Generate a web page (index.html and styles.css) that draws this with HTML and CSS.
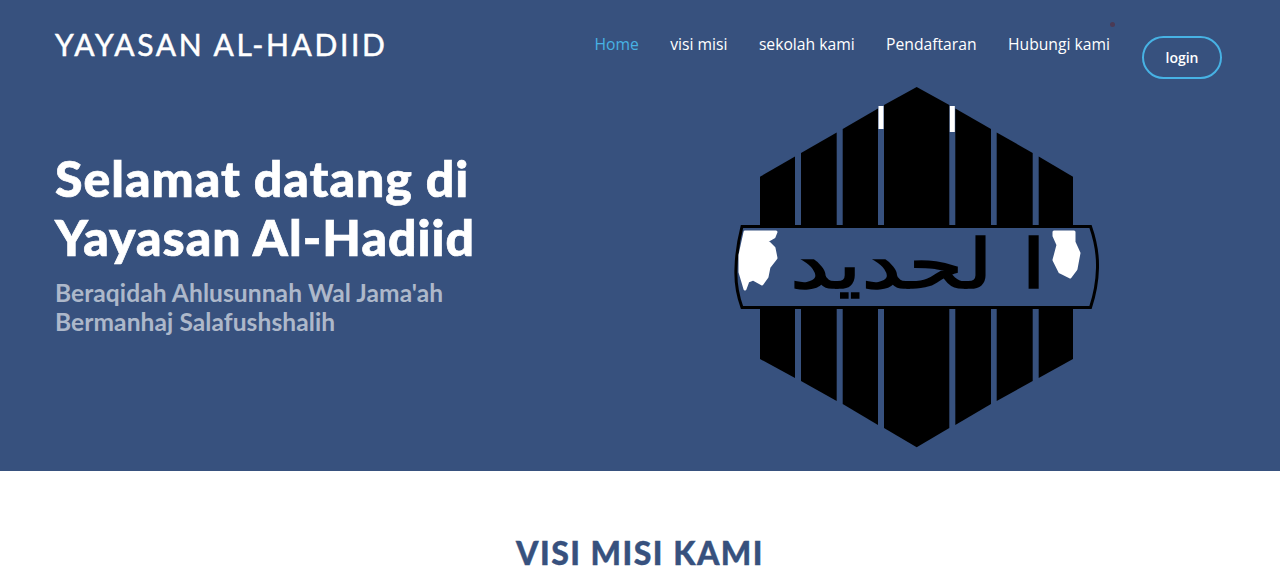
FILE: index.html
```html
<!DOCTYPE html>
<html lang="id">
<head>
<meta charset="utf-8">
<title>Yayasan Al-Hadiid</title>
<link rel="stylesheet" href="styles.css">
</head>
<body>
<section class="hero">
  <header class="topbar">
    <a class="brand" href="#">YAYASAN AL-HADIID</a>
    <nav class="nav">
      <a class="nav-link active" href="#">Home</a>
      <a class="nav-link" href="#">visi misi</a>
      <a class="nav-link" href="#">sekolah kami</a>
      <a class="nav-link" href="#">Pendaftaran</a>
      <a class="nav-link last" href="#">Hubungi kami<span class="dot"></span></a>
      <a class="login" href="#">login</a>
    </nav>
  </header>
  <div class="hero-body">
    <div class="hero-text">
      <h1>Selamat datang di<br>Yayasan Al-Hadiid</h1>
      <h2>Beraqidah Ahlusunnah Wal Jama'ah<br>Bermanhaj Salafushshalih</h2>
    </div>
    <svg class="logo" viewBox="730 80 375 375" width="375" height="375" aria-label="Logo Al-Hadid">
      <path class="bar" d="M760 176.700L795 156.500V225H760Z"/>
      <path class="bar" d="M801 153L836.700 132.400V225H801Z"/>
      <path class="bar" d="M842.700 129L878 108.500V225H842.700Z"/>
      <path class="bar" d="M884 105L916.700 87L949.300 105V225H884Z"/>
      <path class="bar" d="M955.300 108.500L991 129V225H955.300Z"/>
      <path class="bar" d="M996.700 132.400L1032.700 153V225H996.700Z"/>
      <path class="bar" d="M1038.700 156.500L1073 176.700V225H1038.700Z"/>
      <path class="bar" d="M760 309H795V378L760 359Z"/>
      <path class="bar" d="M801 309H836.700V401L801 381Z"/>
      <path class="bar" d="M842.700 309H878V425L842.700 404Z"/>
      <path class="bar" d="M884 309H949.300V428L916.700 447.300L884 428Z"/>
      <path class="bar" d="M955.300 309H991V404L955.300 425Z"/>
      <path class="bar" d="M996.700 309H1032.700V381L996.700 401Z"/>
      <path class="bar" d="M1038.700 309H1073V359L1038.700 378Z"/>
      <rect class="chip" x="878.500" y="106" width="5" height="23"/>
      <rect class="chip" x="949.800" y="106" width="5" height="26"/>
      <path class="band" d="M742 226.500H1090.500Q1098 248 1097.500 268Q1097 288 1090.500 307.500H742Q735 288 736 268Q736.500 248 742 226.500Z"/>
      <path class="blob" d="M745 232H776L774 237L767 241L774 248L776 258L769 267L767 277L762 284L753 279L748 281L745 289L740 272L740 255Z"/>
      <path class="blob" d="M1054 232H1074V242L1079 253L1076 269L1070 277L1060 272L1054 260L1058 245L1054 236Z"/>
      <text class="arabic" x="918" y="288" text-anchor="middle" textLength="256" lengthAdjust="spacingAndGlyphs" direction="rtl">ا لحديد</text>
    </svg>
  </div>
</section>
<section class="about">
  <h2 class="about-title">VISI MISI KAMI</h2>
</section>
</body>
</html>
```
FILE: styles.css
```css
* {
  box-sizing: border-box;
}
html,
body {
  margin: 0;
  height: 575px;
  overflow: hidden;
  background: #fff;
}
a {
  text-decoration: none;
}
.hero {
  height: 471px;
  background: #37517e;
  display: flex;
  flex-direction: column;
}
.topbar {
  height: 80px;
  padding: 0 58px 0 55px;
  display: flex;
  justify-content: space-between;
  align-items: flex-start;
}
.brand {
  margin-top: 24px;
  font: 400 30px/40px Lato, sans-serif;
  letter-spacing: 2.62px;
  -webkit-text-stroke: 0.5px #fff;
  color: #fff;
}
.nav {
  display: flex;
  align-items: flex-start;
}
.nav-link {
  position: relative;
  margin-top: 33px;
  margin-right: 31.4px;
  font: 400 15.7px/22px "Open Sans", sans-serif;
  color: #fff;
}
.nav-link.active {
  color: #47b2e4;
}
.nav-link.last {
  margin-right: 32px;
}
.dot {
  position: absolute;
  right: -5px;
  top: -11px;
  width: 5px;
  height: 5px;
  border-radius: 50%;
  background: #4a3a55;
}
.login {
  margin-top: 36px;
  width: 80px;
  height: 43px;
  border: 2px solid #47b2e4;
  border-radius: 22px;
  font: 600 14px/39px "Open Sans", sans-serif;
  text-align: center;
  color: #fff;
}
.hero-body {
  flex: 1;
  display: flex;
  justify-content: space-between;
  padding: 0 175px 0 55px;
}
.hero-text {
  padding-top: 69px;
}
.hero-text h1 {
  margin: 0;
  font: 900 50px/59px Lato, sans-serif;
  letter-spacing: 1px;
  -webkit-text-stroke: 0.7px #fff;
  color: #fff;
}
.hero-text h2 {
  margin: 11px 0 0;
  font: 700 24.500px/29px Lato, sans-serif;
  letter-spacing: 0.1px;
  color: rgba(255, 255, 255, 0.6);
}
.logo {
  display: block;
  flex: none;
}
.bar {
  fill: #000;
}
.chip {
  fill: #fff;
}
.blob {
  fill: #fff;
  stroke: #fff;
  stroke-width: 3;
  stroke-linejoin: round;
}
.band {
  fill: #37517e;
  stroke: #000;
  stroke-width: 3;
}
.arabic {
  font: 400 68px "DejaVu Sans", sans-serif;
  fill: #000;
  stroke: #000;
  stroke-width: 1.6;
}
.about {
  padding-top: 61px;
}
.about-title {
  margin: 0;
  text-align: center;
  font: 900 32px/42px Lato, sans-serif;
  letter-spacing: 1.5px;
  -webkit-text-stroke: 0.4px #37517e;
  color: #37517e;
}
```
